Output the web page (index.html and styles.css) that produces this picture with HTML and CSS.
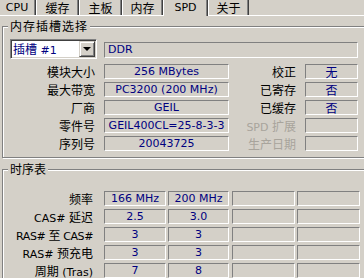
FILE: index.html
```html
<!DOCTYPE html>
<html lang="zh-CN">
<head>
    <meta charset="UTF-8">
    <title>CPU-Z SPD</title>
    <link rel="stylesheet" href="styles.css">
</head>
<body>
    <div class="tabs">
        <div class="tab tab-cpu">CPU</div>
        <div class="tab tab-cache"><span class="zh">缓存</span></div>
        <div class="tab tab-board"><span class="zh">主板</span></div>
        <div class="tab tab-mem"><span class="zh">内存</span></div>
        <div class="tab tab-spd active">SPD</div>
        <div class="tab tab-about"><span class="zh">关于</span></div>
    </div>

    <div class="page">
        <!-- Slot selection -->
        <div class="group group-slot">
            <div class="group-title"><span class="zh">内存插槽选择</span></div>

            <div class="slot-row">
                <div class="combo">
                    <span class="combo-text"><span class="zh">插槽</span> #1</span>
                    <span class="combo-btn"><span class="arrow"></span></span>
                </div>
                <div class="field field-type">DDR</div>
            </div>

            <div class="row">
                <div class="label"><span class="zh">模块大小</span></div>
                <div class="field field-mid">256 MBytes</div>
                <div class="label label-right"><span class="zh">校正</span></div>
                <div class="field field-small"><span class="zh">无</span></div>
            </div>
            <div class="row">
                <div class="label"><span class="zh">最大带宽</span></div>
                <div class="field field-mid">PC3200 (200 MHz)</div>
                <div class="label label-right"><span class="zh">已寄存</span></div>
                <div class="field field-small"><span class="zh">否</span></div>
            </div>
            <div class="row">
                <div class="label"><span class="zh">厂商</span></div>
                <div class="field field-mid">GEIL</div>
                <div class="label label-right"><span class="zh">已缓存</span></div>
                <div class="field field-small"><span class="zh">否</span></div>
            </div>
            <div class="row">
                <div class="label"><span class="zh">零件号</span></div>
                <div class="field field-mid">GEIL400CL=25-8-3-3</div>
                <div class="label label-right disabled">SPD <span class="zh">扩展</span></div>
                <div class="field field-small"></div>
            </div>
            <div class="row">
                <div class="label"><span class="zh">序列号</span></div>
                <div class="field field-mid">20043725</div>
                <div class="label label-right disabled"><span class="zh">生产日期</span></div>
                <div class="field field-small"></div>
            </div>
        </div>

        <!-- Timings table -->
        <div class="group group-timing">
            <div class="group-title"><span class="zh">时序表</span></div>

            <div class="row">
                <div class="label label-timing"><span class="zh">频率</span></div>
                <div class="field cell c1">166 MHz</div>
                <div class="field cell c2">200 MHz</div>
                <div class="field cell c3"></div>
                <div class="field cell c4"></div>
            </div>
            <div class="row">
                <div class="label label-timing">CAS# <span class="zh">延迟</span></div>
                <div class="field cell c1">2.5</div>
                <div class="field cell c2">3.0</div>
                <div class="field cell c3"></div>
                <div class="field cell c4"></div>
            </div>
            <div class="row">
                <div class="label label-timing tight">RAS# <span class="zh">至</span> CAS#</div>
                <div class="field cell c1">3</div>
                <div class="field cell c2">3</div>
                <div class="field cell c3"></div>
                <div class="field cell c4"></div>
            </div>
            <div class="row">
                <div class="label label-timing">RAS# <span class="zh">预充电</span></div>
                <div class="field cell c1">3</div>
                <div class="field cell c2">3</div>
                <div class="field cell c3"></div>
                <div class="field cell c4"></div>
            </div>
            <div class="row">
                <div class="label label-timing"><span class="zh">周期</span> (Tras)</div>
                <div class="field cell c1">7</div>
                <div class="field cell c2">8</div>
                <div class="field cell c3"></div>
                <div class="field cell c4"></div>
            </div>
        </div>
    </div>
</body>
</html>
```

FILE: styles.css
```css
:root {
    --face: #d4d0c8;
    --shadow: #808080;
    --dark: #404040;
    --light: #ffffff;
    --value: #000080;
    --disabled: #a8a49c;
}

* {
    margin: 0;
    padding: 0;
    box-sizing: border-box;
}

body {
    font-family: "DejaVu Sans", "Noto Sans CJK SC", sans-serif;
    font-size: 11px;
    color: #000;
    background: var(--face);
    width: 364px;
    height: 278px;
    overflow: hidden;
}

.zh {
    font-family: "Noto Sans CJK SC", sans-serif;
    font-size: 12px;
}

/* Tabs */
.tabs {
    display: flex;
    align-items: flex-end;
    height: 16px;
    margin-left: -2px;
    border-bottom: 1px solid var(--light);
}

.tab {
    height: 15px;
    padding-top: 1px;
    line-height: 14px;
    text-align: center;
    white-space: nowrap;
    border-left: 1px solid var(--light);
    border-right: 1px solid var(--dark);
    box-shadow: inset -1px 0 0 var(--shadow);
}

.tab.active {
    height: 16px;
    margin-bottom: -1px;
    position: relative;
    background: var(--face);
}

.tab-cpu { width: 38px; }
.tab-cache { width: 43px; }
.tab-board { width: 43px; }
.tab-mem { width: 41px; }
.tab-spd { width: 45px; }
.tab-about { width: 41px; }

/* Page and group boxes */
.page {
    padding: 10px 0 0 2px;
}

.group {
    position: relative;
    width: 420px;
    border: 1px solid var(--shadow);
    box-shadow: inset 1px 1px 0 var(--light), 1px 1px 0 var(--light);
    padding: 12px 0 3px 7px;
}

.group-timing {
    margin-top: 11px;
    padding-top: 21px;
}

.group-title {
    position: absolute;
    top: -8px;
    left: 5px;
    padding: 0 2px;
    line-height: 14px;
    background: var(--face);
}

.group-slot .group-title {
    letter-spacing: 1px;
}

/* Rows */
.slot-row {
    display: flex;
    height: 25px;
}

.row {
    display: flex;
    height: 18px;
}

.label {
    width: 85px;
    margin-right: 9px;
    text-align: right;
    line-height: 15px;
    white-space: nowrap;
}

.label-right {
    width: 67px;
}

.label-timing {
    width: 83px;
    margin-right: 11px;
}

.tight {
    letter-spacing: -0.4px;
}

.disabled {
    color: var(--disabled);
}

.field {
    height: 15px;
    line-height: 13px;
    text-align: center;
    color: var(--value);
    white-space: nowrap;
    border: 1px solid;
    border-color: var(--shadow) var(--light) var(--light) var(--shadow);
}

.field-type {
    width: 254px;
    height: 16px;
    margin-top: 3px;
    line-height: 14px;
    text-align: left;
    padding-left: 3px;
}

.field-mid { width: 125px; }
.field-small { width: 53px; }

.c1 { width: 62px; }
.c2 { width: 61px; margin-left: 2px; }
.c3 { width: 63px; margin-left: 3px; }
.c4 { width: 63px; margin-left: 2px; }

/* Combo box */
.combo {
    display: flex;
    justify-content: space-between;
    width: 87px;
    height: 20px;
    margin-right: 7px;
    padding: 1px;
    background: var(--light);
    border: 1px solid;
    border-color: var(--shadow) var(--light) var(--light) var(--shadow);
    box-shadow: inset 1px 1px 0 var(--dark), inset -1px -1px 0 var(--face);
}

.combo-text {
    padding-left: 1px;
    line-height: 16px;
    color: var(--value);
    white-space: nowrap;
}

.combo-btn {
    display: flex;
    align-items: center;
    justify-content: center;
    width: 16px;
    height: 16px;
    background: var(--face);
    border: 1px solid;
    border-color: var(--face) var(--dark) var(--dark) var(--face);
    box-shadow: inset 1px 1px 0 var(--light), inset -1px -1px 0 var(--shadow);
}

.arrow {
    width: 0;
    height: 0;
    border-left: 4px solid transparent;
    border-right: 4px solid transparent;
    border-top: 4px solid #000;
}
```
